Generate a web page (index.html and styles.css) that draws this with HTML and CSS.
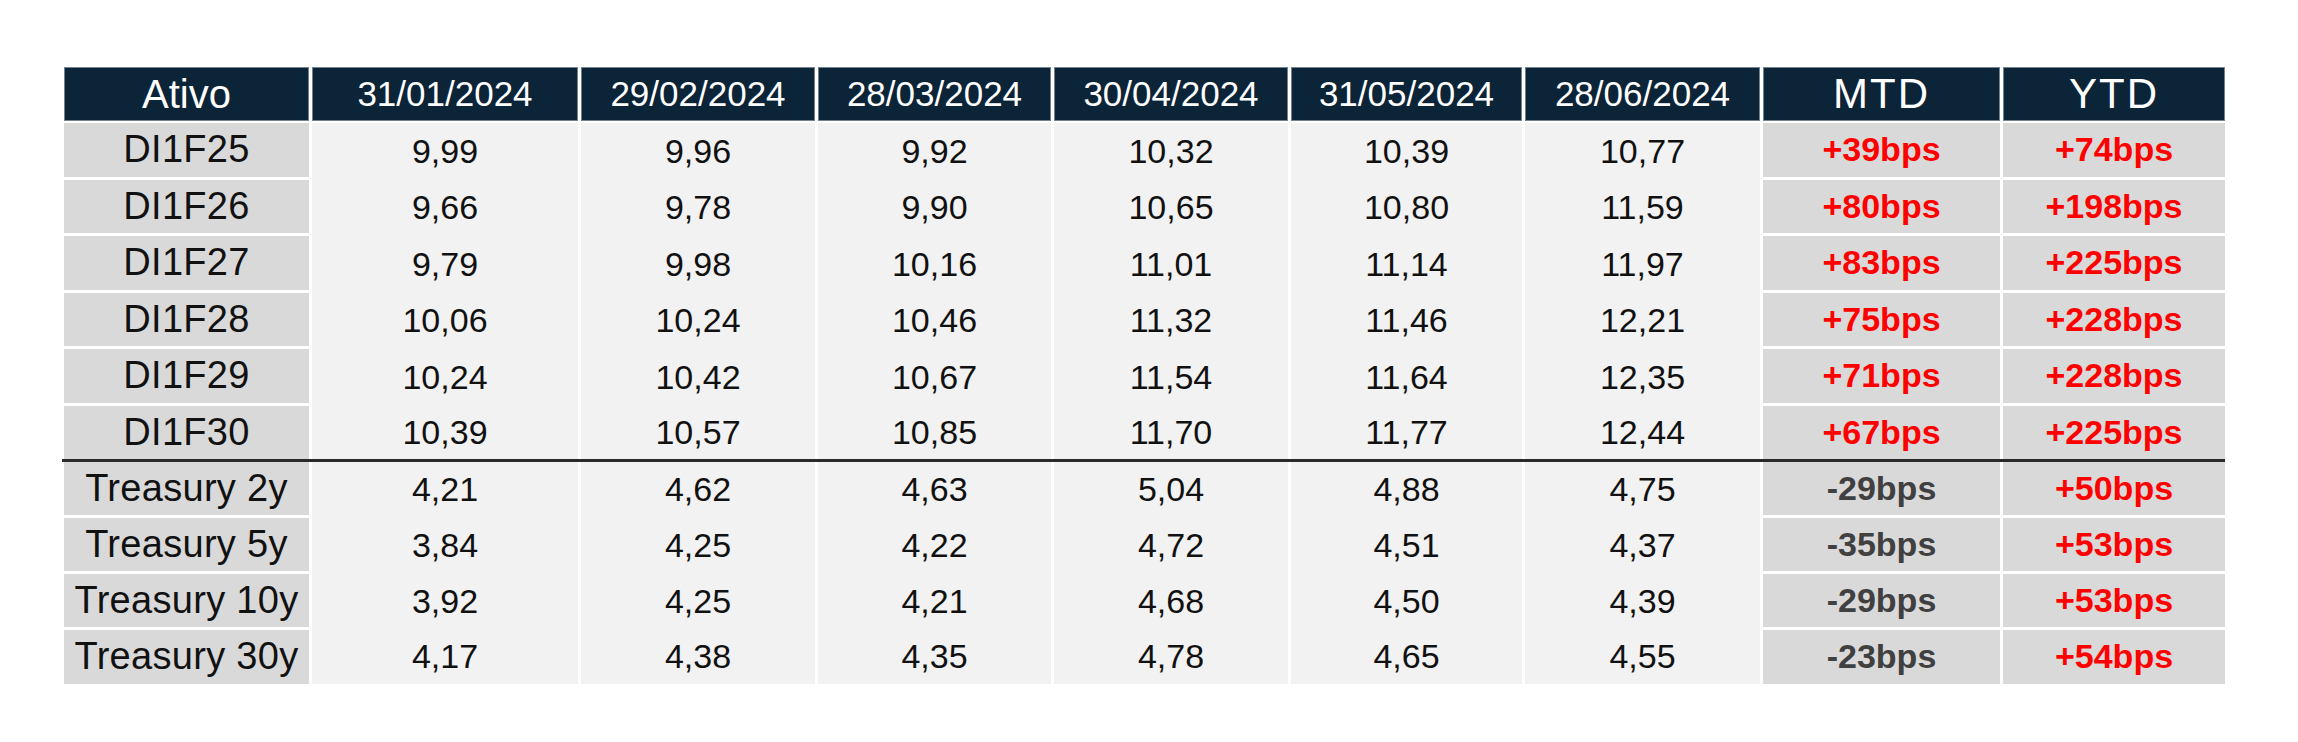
FILE: index.html
```html
<!DOCTYPE html>
<html lang="pt-BR">
<head>
<meta charset="utf-8">
<title>Curvas de juros</title>
<link rel="stylesheet" href="styles.css">
</head>
<body>
<main class="page">
  <div class="grid">
    <div class="hd hd-big">Ativo</div>
    <div class="hd">31/01/2024</div>
    <div class="hd">29/02/2024</div>
    <div class="hd">28/03/2024</div>
    <div class="hd">30/04/2024</div>
    <div class="hd">31/05/2024</div>
    <div class="hd">28/06/2024</div>
    <div class="hd hd-xl">MTD</div>
    <div class="hd hd-xl">YTD</div>

    <div class="lb gap">DI1F25</div><div class="v">9,99</div><div class="v">9,96</div><div class="v">9,92</div><div class="v">10,32</div><div class="v">10,39</div><div class="v">10,77</div><div class="ch up gap">+39bps</div><div class="ch up gap">+74bps</div>
    <div class="lb gap">DI1F26</div><div class="v">9,66</div><div class="v">9,78</div><div class="v">9,90</div><div class="v">10,65</div><div class="v">10,80</div><div class="v">11,59</div><div class="ch up gap">+80bps</div><div class="ch up gap">+198bps</div>
    <div class="lb gap">DI1F27</div><div class="v">9,79</div><div class="v">9,98</div><div class="v">10,16</div><div class="v">11,01</div><div class="v">11,14</div><div class="v">11,97</div><div class="ch up gap">+83bps</div><div class="ch up gap">+225bps</div>
    <div class="lb gap">DI1F28</div><div class="v">10,06</div><div class="v">10,24</div><div class="v">10,46</div><div class="v">11,32</div><div class="v">11,46</div><div class="v">12,21</div><div class="ch up gap">+75bps</div><div class="ch up gap">+228bps</div>
    <div class="lb gap">DI1F29</div><div class="v">10,24</div><div class="v">10,42</div><div class="v">10,67</div><div class="v">11,54</div><div class="v">11,64</div><div class="v">12,35</div><div class="ch up gap">+71bps</div><div class="ch up gap">+228bps</div>
    <div class="lb">DI1F30</div><div class="v">10,39</div><div class="v">10,57</div><div class="v">10,85</div><div class="v">11,70</div><div class="v">11,77</div><div class="v">12,44</div><div class="ch up">+67bps</div><div class="ch up">+225bps</div>

    <div class="rule"></div>

    <div class="lb gap">Treasury 2y</div><div class="v">4,21</div><div class="v">4,62</div><div class="v">4,63</div><div class="v">5,04</div><div class="v">4,88</div><div class="v">4,75</div><div class="ch down gap">-29bps</div><div class="ch up gap">+50bps</div>
    <div class="lb gap">Treasury 5y</div><div class="v">3,84</div><div class="v">4,25</div><div class="v">4,22</div><div class="v">4,72</div><div class="v">4,51</div><div class="v">4,37</div><div class="ch down gap">-35bps</div><div class="ch up gap">+53bps</div>
    <div class="lb gap">Treasury 10y</div><div class="v">3,92</div><div class="v">4,25</div><div class="v">4,21</div><div class="v">4,68</div><div class="v">4,50</div><div class="v">4,39</div><div class="ch down gap">-29bps</div><div class="ch up gap">+53bps</div>
    <div class="lb">Treasury 30y</div><div class="v">4,17</div><div class="v">4,38</div><div class="v">4,35</div><div class="v">4,78</div><div class="v">4,65</div><div class="v">4,55</div><div class="ch down">-23bps</div><div class="ch up">+54bps</div>
  </div>
</main>
</body>
</html>
```
FILE: styles.css
```css
html, body {
  margin: 0;
  padding: 0;
  background: #ffffff;
}

.page {
  padding: 67px 0 0 64px;
  font-family: "Liberation Sans", Arial, sans-serif;
}

.grid {
  display: grid;
  width: max-content;
  grid-template-columns: 245px 266px 234px 233px 234px 231px 235px 237px 222px;
  grid-template-rows: 56px repeat(5, 56.5px) 53px 3px repeat(3, 56px) 54px;
  column-gap: 3px;
}

.grid > div {
  display: flex;
  align-items: center;
  justify-content: center;
  box-sizing: border-box;
  white-space: nowrap;
}

.hd {
  background: #0c2438;
  color: #ffffff;
  font-size: 35px;
  border-bottom: 2px solid #ffffff;
  box-shadow: inset 0 0 0 1px #75818c;
}

.hd-big {
  font-size: 40px;
}

.hd-xl {
  font-size: 42px;
  letter-spacing: 2px;
}

.lb {
  background: #d9d9d9;
  color: #111111;
  font-size: 38px;
  letter-spacing: 0.3px;
}

.v {
  background: #f2f2f2;
  color: #111111;
  font-size: 34px;
}

.ch {
  background: #d9d9d9;
  font-size: 34px;
  font-weight: bold;
}

.up {
  color: #ff0000;
}

.down {
  color: #404040;
}

.gap {
  border-bottom: 3px solid #ffffff;
}

.grid > .rule {
  grid-column: 1 / -1;
  background: #2a2a2a;
  margin-left: -2px;
}
```
